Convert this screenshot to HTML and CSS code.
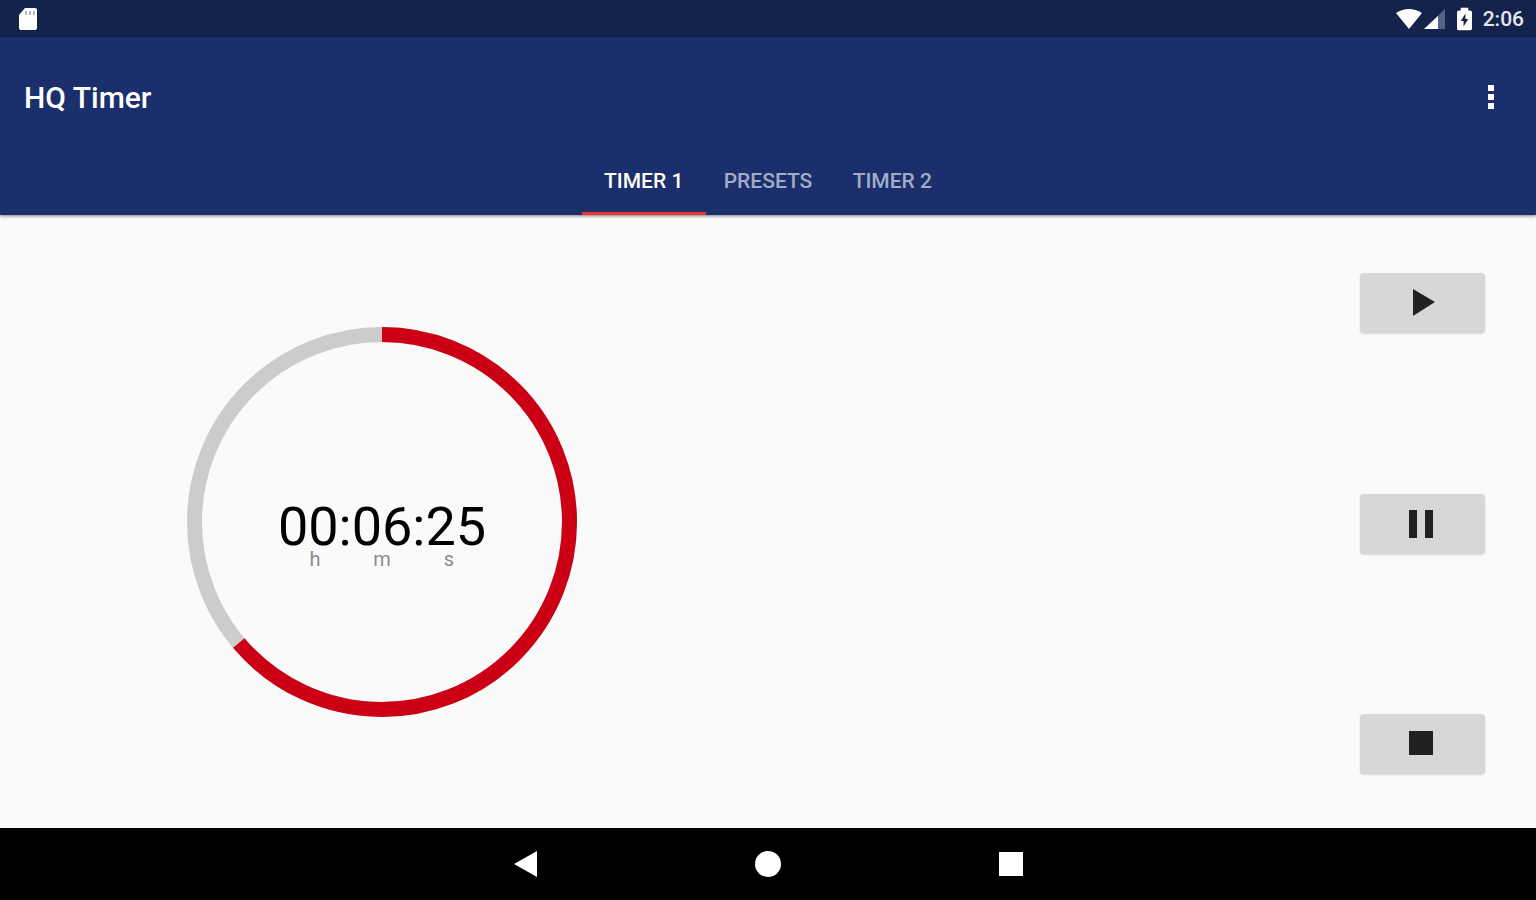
FILE: index.html
```html
<!doctype html>
<html lang="en">
	<head>
		<meta charset="utf-8">
		<meta name="viewport" content="width=device-width, initial-scale=1">
		<title>HQ Timer</title>
		<link rel="stylesheet" href="styles.css">
	</head>

	<body>
		<div class="status-bar">
			<svg class="sd-card" width="20" height="24" viewBox="0 0 20 24">
				<path d="M7 1h10q2 0 2 2v18q0 2-2 2H3q-2 0-2-2V8z" fill="#fff"/>
				<path d="M7 4h2v4H7zM11 4h2v4h-2zM15 4h2v4h-2z" fill="#b4b9c6"/>
			</svg>
			<div class="status-icons">
				<svg width="26" height="20" viewBox="0 0 26 20">
					<path d="M0 4Q13-4 26 4L13 20z" fill="#fff"/>
				</svg>
				<svg class="signal" width="21" height="20" viewBox="0 0 21 20">
					<path d="M0 20L21 0v20z" fill="#566283"/>
					<path d="M0 20L14 7v13z" fill="#fff"/>
				</svg>
				<svg class="battery" width="15" height="24" viewBox="0 0 16 24">
					<path d="M4 0h8v3h2q2 0 2 2v17q0 2-2 2H2q-2 0-2-2V5q0-2 2-2h2z" fill="#fff"/>
					<path d="M9 6L4 14h3v6l5-8H9z" fill="#14234c"/>
				</svg>
				<span class="clock">2:06</span>
			</div>
		</div>

		<header class="app-header">
			<div class="toolbar">
				<h1>HQ Timer</h1>
				<button class="menu-button" type="button" aria-label="More options">
					<svg width="6" height="24" viewBox="0 0 6 24">
						<path d="M0 0h6v6H0zM0 9h6v6H0zM0 18h6v6H0z" fill="#fff"/>
					</svg>
				</button>
			</div>
			<nav class="tabs">
				<a class="tab active" href="#timer1">TIMER 1</a>
				<a class="tab" href="#presets">PRESETS</a>
				<a class="tab" href="#timer2">TIMER 2</a>
			</nav>
		</header>

		<main class="timer" id="timer1">
			<div class="dial-pane">
				<div class="dial">
					<svg class="ring" viewBox="0 0 390 390">
						<circle class="ring-track" cx="195" cy="195" r="187.5"/>
						<circle class="ring-left" cx="195" cy="195" r="187.5" pathLength="600" stroke-dasharray="383 600" transform="rotate(-90 195 195)"/>
					</svg>
					<div class="readout">
						<div class="time">00:06:25</div>
						<div class="units">
							<span>h</span>
							<span>m</span>
							<span>s</span>
						</div>
					</div>
				</div>
			</div>
			<div class="controls">
				<button class="control" type="button" aria-label="Start">
					<svg width="48" height="48" viewBox="0 0 48 48">
						<path d="M14 10v27l22-14z"/>
					</svg>
				</button>
				<button class="control" type="button" aria-label="Pause">
					<svg width="48" height="48" viewBox="0 0 48 48">
						<path d="M10 10h8v28h-8zM26 10h8v28h-8z"/>
					</svg>
				</button>
				<button class="control" type="button" aria-label="Stop">
					<svg width="48" height="48" viewBox="0 0 48 48">
						<path d="M10 11h24v24H10z"/>
					</svg>
				</button>
			</div>
		</main>

		<footer class="nav-bar">
			<button class="nav-button" type="button" aria-label="Back">
				<svg width="26" height="26" viewBox="0 0 26 26">
					<path d="M25 0v26L2 13z"/>
				</svg>
			</button>
			<button class="nav-button" type="button" aria-label="Home">
				<svg width="26" height="26" viewBox="0 0 26 26">
					<circle cx="13" cy="13" r="13"/>
				</svg>
			</button>
			<button class="nav-button" type="button" aria-label="Recent apps">
				<svg width="26" height="26" viewBox="0 0 26 26">
					<path d="M1 1h24v24H1z"/>
				</svg>
			</button>
		</footer>
	</body>
</html>
```
FILE: styles.css
```css
* {
	box-sizing: border-box;
}
body {
	margin: 0;
	min-height: 100vh;
	display: flex;
	flex-direction: column;
	background: #fafafa;
	color: #000;
	font-family: Roboto, sans-serif;
}
button {
	border: 0;
	padding: 0;
	background: none;
	cursor: pointer;
}
svg {
	display: block;
}

.status-bar {
	display: flex;
	justify-content: space-between;
	align-items: center;
	height: 37px;
	padding: 0 12px 0 18px;
	background: #14234c;
}
.status-icons {
	display: flex;
	align-items: center;
}
.signal {
	margin: 0 12px 0 2px;
}
.clock {
	margin-left: 11px;
	color: #e4e6ec;
	font-size: 21px;
	font-weight: 500;
}

.app-header {
	background: #1a2f6b;
	box-shadow: 0 1px 3px rgba(0, 0, 0, 0.5);
}
.toolbar {
	display: flex;
	justify-content: space-between;
	align-items: center;
	height: 120px;
	padding: 0 24px;
}
.toolbar h1 {
	margin: 0;
	color: #fff;
	font-size: 30px;
	font-weight: 500;
}
.menu-button {
	display: flex;
	justify-content: center;
	align-items: center;
	width: 42px;
	height: 48px;
}
.tabs {
	display: flex;
	justify-content: center;
}
.tab {
	min-width: 124px;
	height: 58px;
	padding: 0 18px;
	border-bottom: 3px solid transparent;
	color: #a3acc4;
	font-size: 21px;
	font-weight: 500;
	line-height: 48px;
	text-align: center;
	text-decoration: none;
}
.tab.active {
	color: #fff;
	border-bottom-color: #e53935;
}

.timer {
	flex: 1;
	display: flex;
	justify-content: space-between;
}
.dial-pane {
	display: flex;
	justify-content: center;
	align-items: center;
	width: 50%;
	padding-right: 4px;
}
.dial {
	display: grid;
	place-items: center;
	width: 390px;
}
.ring, .readout {
	grid-area: 1 / 1;
}
.ring {
	width: 100%;
}
.ring circle {
	fill: none;
	stroke-width: 15;
}
.ring .ring-track {
	stroke: #ccc;
}
.ring .ring-left {
	stroke: #cb0014;
}
.readout {
	padding-top: 26px;
	text-align: center;
}
.time {
	font-size: 54px;
	line-height: 48px;
}
.units {
	display: grid;
	grid-template-columns: repeat(3, 67px);
	justify-content: center;
	color: #8c8c8c;
	font-size: 20px;
	line-height: 16px;
}

.controls {
	display: flex;
	flex-direction: column;
	justify-content: space-between;
	padding: 58px 51px 54px;
}
.control {
	display: flex;
	justify-content: center;
	align-items: center;
	width: 125px;
	height: 60px;
	border-radius: 4px;
	background: #d6d8d7;
	box-shadow: 0 1px 2px rgba(0, 0, 0, 0.15);
}
.control svg {
	fill: #212121;
}

.nav-bar {
	display: flex;
	justify-content: center;
	align-items: center;
	gap: 123px;
	height: 72px;
	background: #000;
}
.nav-button {
	display: flex;
	justify-content: center;
	align-items: center;
	width: 120px;
	height: 72px;
}
.nav-button svg {
	fill: #fff;
}
```
